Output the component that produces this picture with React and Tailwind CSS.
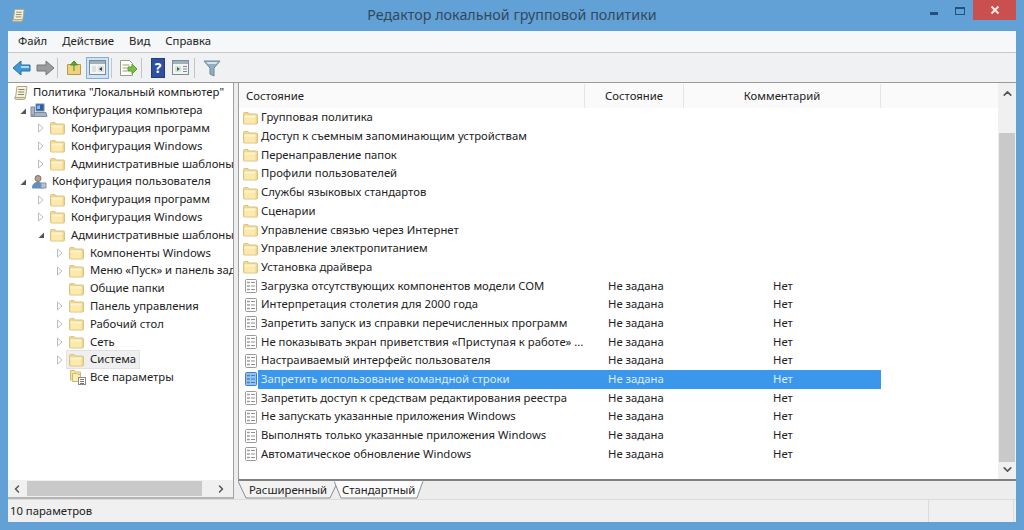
import { ChevronUp, ChevronDown, ChevronLeft, ChevronRight } from 'lucide-react';

const treeRows = [
  { label: 'Конфигурация программ', depth: 2, arrow: 'closed' },
  { label: 'Конфигурация Windows', depth: 2, arrow: 'closed' },
  { label: 'Административные шаблоны', depth: 2, arrow: 'closed' },
];

const userRows = [
  { label: 'Конфигурация программ', depth: 2, arrow: 'closed' },
  { label: 'Конфигурация Windows', depth: 2, arrow: 'closed' },
  { label: 'Административные шаблоны', depth: 2, arrow: 'open' },
  { label: 'Компоненты Windows', depth: 3, arrow: 'closed' },
  { label: 'Меню «Пуск» и панель задач', depth: 3, arrow: 'closed' },
  { label: 'Общие папки', depth: 3 },
  { label: 'Панель управления', depth: 3, arrow: 'closed' },
  { label: 'Рабочий стол', depth: 3, arrow: 'closed' },
  { label: 'Сеть', depth: 3, arrow: 'closed' },
  { label: 'Система', depth: 3, arrow: 'closed', selected: true },
];

const folders = [
  'Групповая политика',
  'Доступ к съемным запоминающим устройствам',
  'Перенаправление папок',
  'Профили пользователей',
  'Службы языковых стандартов',
  'Сценарии',
  'Управление связью через Интернет',
  'Управление электропитанием',
  'Установка драйвера',
];

const policies = [
  'Загрузка отсутствующих компонентов модели COM',
  'Интерпретация столетия для 2000 года',
  'Запретить запуск из справки перечисленных программ',
  'Не показывать экран приветствия «Приступая к работе» ...',
  'Настраиваемый интерфейс пользователя',
  'Запретить использование командной строки',
  'Запретить доступ к средствам редактирования реестра',
  'Не запускать указанные приложения Windows',
  'Выполнять только указанные приложения Windows',
  'Автоматическое обновление Windows',
];

const FolderIcon = () => (
  <svg width="16" height="16" viewBox="0 0 16 16" className="shrink-0">
    <path d="M1.500 3.500q0-1 1-1h3.500l1 1.500h7.500q1 0 1 1v8q0 1-1 1h-12q-1 0-1-1z" fill="#f3d684" stroke="#d9c48f" />
    <path d="M2.500 5.500h11v8h-11z" fill="#fbeaab" />
    <path d="M2.500 5.500h11v2h-11z" fill="#fdf4cf" />
  </svg>
);

const PolicyIcon = ({ selected }) => (
  <svg width="14" height="16" viewBox="0 0 14 16" className="shrink-0">
    <rect x="1.500" y="1.500" width="11" height="13" rx="1" fill={selected ? '#8fc3f5' : '#fff'} stroke={selected ? '#3a7fc8' : '#9a9a9a'} />
    <path d="M3.500 4.500h2M3.500 8h2M3.500 11.500h2" stroke="#333" strokeWidth="1.300" strokeDasharray="1 .6" />
    <path d="M7 4.500h4M7 8h4M7 11.500h4" stroke={selected ? '#3a7fc8' : '#8e8e8e'} />
  </svg>
);

const ScrollIcon = ({ size = 16 }) => (
  <svg width={size} height={size} viewBox="0 0 16 16" className="shrink-0">
    <path d="M4 1.500h10l-1.500 11h-10z" fill="#f5f1dc" stroke="#b0a988" />
    <path d="M1.500 12.500c0 2 1 2 2 2h7c1 0 2-.5 2-2z" fill="#e3dcb8" stroke="#b0a988" />
    <path d="M5.500 4.500h6M5.200 7h6M5 9.500h6" stroke="#8a8468" />
  </svg>
);

const ComputerIcon = () => (
  <svg width="18" height="16" viewBox="0 0 18 16" className="shrink-0">
    <rect x="6" y="1" width="8" height="7" fill="#2a5fa8" stroke="#7c8ca3" />
    <path d="M7 3l3-1v4H7z" fill="#8db7e6" />
    <path d="M2 9.500h14l1 4H1z" fill="#a7b3c6" stroke="#7c8ca3" />
    <rect x="1" y="4" width="3.500" height="8" fill="#aab6c7" stroke="#7c8ca3" />
  </svg>
);

const UserIcon = () => (
  <svg width="18" height="16" viewBox="0 0 18 16" className="shrink-0">
    <circle cx="8" cy="4.500" r="3" fill="#b9a28c" stroke="#7d6f62" />
    <path d="M2.500 14c0-4 2-5.500 5.500-5.500s5.500 1.500 5.500 5.500z" fill="#5f8fc6" stroke="#6c86a8" />
    <path d="M11 9h5v5h-5z" fill="#b6c3d2" stroke="#8493a5" />
  </svg>
);

const Arrow = ({ type }) => {
  if (type === 'open') {
    return (
      <svg width="8" height="8" viewBox="0 0 8 8" className="shrink-0">
        <path d="M7 1.500V7H1.500z" fill="#555" />
      </svg>
    );
  }
  if (type === 'closed') {
    return (
      <svg width="8" height="10" viewBox="0 0 8 10" className="shrink-0">
        <path d="M1.500 1L6 5 1.500 9z" fill="#fff" stroke="#bdbdbd" />
      </svg>
    );
  }
  return <span className="w-2 shrink-0" />;
};

const depthPad = { 2: 'pl-[29px]', 3: 'pl-[48px]' };

const TreeRow = ({ row }) => (
  <div className={`h-[17.8px] flex items-center whitespace-nowrap ${depthPad[row.depth]}`}>
    <Arrow type={row.arrow} />
    <div className={`flex items-center gap-[6px] ml-[3px] h-[17px] pl-[1px] pr-[3px] ${row.selected ? 'bg-[#efefef] outline outline-[#e2e2e2]' : ''}`}>
      <FolderIcon />
      <span>{row.label}</span>
    </div>
  </div>
);

const ToolbarSep = ({ className }) => <div className={`w-px h-[20px] bg-[#c4c4c4] ${className}`} />;

const Toolbar = () => (
  <div className="h-[30px] shrink-0 flex items-center pl-[4px] border-t border-[#c8c8c8] bg-[#f0f1f2]">
    <svg width="20" height="16" viewBox="0 0 20 16" className="shrink-0">
      <path d="M1 8l8-7v4h9v6H9v4z" fill="#3d9ad6" stroke="#2a6f9e" />
      <path d="M9 6h8v2H9z" fill="#a9dcf5" />
    </svg>
    <svg width="20" height="16" viewBox="0 0 20 16" className="shrink-0 ml-[3px]">
      <path d="M19 8l-8-7v4H2v6h9v4z" fill="#9b9b9b" stroke="#777" />
    </svg>
    <ToolbarSep className="ml-[2px]" />
    <svg width="18" height="18" viewBox="0 0 18 18" className="shrink-0 ml-[7px]">
      <path d="M2.500 5.500h13v10h-13z" fill="#edd37e" stroke="#b9984b" />
      <path d="M9 12V5M5.500 6L9 2l3.500 4z" fill="#5aa832" stroke="#4a8f28" />
    </svg>
    <div className="w-[23px] h-[22px] ml-[3px] shrink-0 flex items-center justify-center bg-[#cfe3f4] border border-[#7fb0dc]">
      <svg width="17" height="15" viewBox="0 0 17 15">
        <rect x=".5" y=".5" width="16" height="14" fill="#f4f4f4" stroke="#7d8b95" />
        <rect x="1" y="1" width="15" height="3" fill="#9fb0bb" />
        <path d="M3 6h4v6H3zM9 6h6v6H9z" fill="#d9e4dc" />
        <path d="M13 7l-3 2 3 2z" fill="#2c3e50" />
      </svg>
    </div>
    <ToolbarSep className="ml-[2px]" />
    <svg width="19" height="18" viewBox="0 0 19 18" className="shrink-0 ml-[7px]">
      <path d="M1.500 1.500h9l3 3v12h-12z" fill="#fff" stroke="#9a9a7e" />
      <path d="M3.500 6h7M3.500 9h5M3.500 12h5" stroke="#a0a070" />
      <path d="M9 8h4V5l5 5-5 5v-3H9z" fill="#7cc142" stroke="#5a9a2e" />
    </svg>
    <ToolbarSep className="ml-[3px]" />
    <div className="w-[14px] h-[20px] ml-[9px] shrink-0 bg-[#2f4f9f] border border-[#243c7a] flex items-center justify-center text-white text-[14px] font-bold leading-none">?</div>
    <svg width="17" height="15" viewBox="0 0 17 15" className="shrink-0 ml-[7px]">
      <rect x=".5" y=".5" width="16" height="14" fill="#f4f4f4" stroke="#7d8b95" />
      <rect x="1" y="1" width="15" height="3" fill="#9fb0bb" />
      <path d="M3 6h6v6H3z" fill="#d9e4dc" />
      <path d="M5 7l3 2-3 2z" fill="#2c6e50" />
      <path d="M11 6.500h4M11 9h4M11 11.500h4" stroke="#7d8b95" />
    </svg>
    <ToolbarSep className="ml-[5px]" />
    <svg width="18" height="18" viewBox="0 0 18 18" className="shrink-0 ml-[8px]">
      <path d="M1 2h16l-6 7v8l-4-2V9z" fill="#8eb0c4" stroke="#6b8698" />
      <path d="M3 3h12l-2 2H5z" fill="#d4e2ea" />
    </svg>
  </div>
);

const App = () => (
  <div className="w-[1024px] h-[530px] overflow-hidden flex flex-col bg-[#62a1d5] px-[8px] pb-[8px] text-[#222] text-[11.3px] font-['Noto_Sans',sans-serif]">
    {/* title bar */}
    <div className="h-[31px] shrink-0 grid grid-cols-[1fr_auto_1fr] items-center">
      <div className="ml-[3px]"><ScrollIcon size={15} /></div>
      <div className="text-[#33485c] text-[14.3px] -mt-[1px]">Редактор локальной групповой политики</div>
      <div className="flex items-start justify-end h-full">
        <div className="w-[8px] h-[3px] bg-[#24507e] mt-[12px]" />
        <div className="w-[10px] h-[8px] border border-[#24507e] border-t-2 mt-[7px] ml-[17px]" />
        <div className="w-[43px] h-[20px] bg-[#c9504f] ml-[8px] flex items-center justify-center">
          <svg width="10" height="10" viewBox="0 0 10 10">
            <path d="M1.500 1.500l7 7M8.500 1.500l-7 7" stroke="#fde8e3" strokeWidth="2" />
          </svg>
        </div>
      </div>
    </div>

    {/* menu */}
    <div className="h-[21px] shrink-0 bg-[#f5f7f9] flex items-center gap-[15px] pl-[10px]">
      <span>Файл</span>
      <span>Действие</span>
      <span>Вид</span>
      <span>Справка</span>
    </div>

    <Toolbar />

    {/* panes */}
    <div className="flex-1 min-h-0 flex bg-[#ededed] border-t border-[#9a9a9a]">
      {/* tree */}
      <div className="w-[226px] shrink-0 flex flex-col bg-white border-r border-[#a0a0a0] border-b-2 border-b-[#b5b5b5]">
        <div className="flex-1 min-h-0 overflow-hidden pt-[1px]">
          <div className="h-[17.8px] flex items-center gap-[4px] pl-[5px] whitespace-nowrap">
            <ScrollIcon />
            <span>Политика "Локальный компьютер"</span>
          </div>
          <div className="h-[17.8px] flex items-center gap-[3px] pl-[11px] whitespace-nowrap">
            <Arrow type="open" />
            <ComputerIcon />
            <span className="ml-[1px]">Конфигурация компьютера</span>
          </div>
          {treeRows.map((r, i) => <TreeRow key={i} row={r} />)}
          <div className="h-[17.8px] flex items-center gap-[3px] pl-[11px] whitespace-nowrap">
            <Arrow type="open" />
            <UserIcon />
            <span className="ml-[1px]">Конфигурация пользователя</span>
          </div>
          {userRows.map((r, i) => <TreeRow key={i} row={r} />)}
          <div className="h-[17.8px] flex items-center gap-[3px] pl-[61px] whitespace-nowrap">
            <svg width="18" height="17" viewBox="0 0 18 17" className="shrink-0">
              <path d="M1.500 1.500h4l1 1.500h5v8h-10z" fill="#f6e3a2" stroke="#d0b872" />
              <path d="M3.500 4.500h4l1 1h3v7h-8z" fill="#fbeeb8" stroke="#d0b872" />
              <rect x="9.500" y="8.500" width="7" height="7" fill="#fff" stroke="#8a8a8a" />
              <path d="M11 10.500h4M11 12.500h4M11 14.500h4" stroke="#777" />
            </svg>
            <span>Все параметры</span>
          </div>
        </div>
        <div className="h-[17px] shrink-0 flex items-center bg-[#f0f0f0]">
          <ChevronLeft size={12} strokeWidth={3} className="text-[#555] ml-[3px]" />
          <div className="w-[175px] h-[15px] bg-[#c9c9c9] ml-[4px]" />
          <ChevronRight size={12} strokeWidth={3} className="text-[#555] ml-[13px]" />
        </div>
      </div>

      {/* list */}
      <div className="flex-1 min-w-0 flex flex-col ml-[4px]">
        <div className="flex-1 min-h-0 flex bg-white border-l border-[#a0a0a0] border-b-2 border-b-[#808080]">
          <div className="flex-1 min-w-0 flex flex-col">
            <div className="h-[25px] shrink-0 flex items-center bg-[#fafafa] pt-[1px]">
              <div className="w-[346px] h-full flex items-center pl-[7px] border-r border-[#e5e5e5]">Состояние</div>
              <div className="w-[99px] h-full flex items-center pl-[20px] border-r border-[#e5e5e5]">Состояние</div>
              <div className="w-[197px] h-full flex items-center justify-center border-r border-[#e5e5e5]">Комментарий</div>
            </div>
            <div className="pt-[0.5px]">
              {folders.map((f) => (
                <div key={f} className="h-[18.7px] flex items-center pl-[3px] gap-[3px] whitespace-nowrap">
                  <FolderIcon />
                  <span>{f}</span>
                </div>
              ))}
              {policies.map((p, i) => {
                const selected = i === 5;
                return (
                  <div key={p} className="h-[18.7px] w-[642px] flex items-center pl-[5px] whitespace-nowrap">
                    <PolicyIcon selected={selected} />
                    <div className={`flex-1 h-full flex items-center pl-[3px] ${selected ? 'bg-[#3b97eb] text-[#dcecfb]' : ''}`}>
                      <span className="w-[347px]">{p}</span>
                      <span className="w-[165px]">Не задана</span>
                      <span>Нет</span>
                    </div>
                  </div>
                );
              })}
            </div>
          </div>
          <div className="w-[18px] shrink-0 flex flex-col items-center bg-[#f0f0f0]">
            <ChevronUp size={13} strokeWidth={3} className="text-[#555] mt-[4px]" />
            <div className="w-[16px] h-[329px] bg-[#c9c9c9] mt-[33px]" />
            <ChevronDown size={13} strokeWidth={3} className="text-[#555] mt-[1px]" />
          </div>
        </div>
        <div className="h-[18px] shrink-0 flex">
          <div className="relative w-[101px] h-[18px] flex items-center pl-[11px]">
            <svg width="101" height="18" viewBox="0 0 101 18" className="absolute inset-0">
              <path d="M0 0L8 17H92L100 0" fill="#f2f2f2" stroke="#8c8c8c" />
            </svg>
            <span className="relative">Расширенный</span>
          </div>
          <div className="relative w-[90px] h-[18px] -ml-[5px] flex items-center pl-[8px]">
            <svg width="90" height="18" viewBox="0 0 90 18" className="absolute inset-0">
              <path d="M0 0L7 17H83L89 0" fill="#fbfbfb" stroke="#8c8c8c" />
              <path d="M0 0H89" stroke="#fbfbfb" />
            </svg>
            <span className="relative">Стандартный</span>
          </div>
        </div>
      </div>
    </div>

    {/* status */}
    <div className="h-[23px] shrink-0 flex items-center bg-[#f0f0f0] border-t border-[#dcdcdc]">
      <span className="w-[921px] h-full flex items-center pl-[2px] pt-[1px] border-r border-[#dcdcdc]">10 параметров</span>
      <span className="w-[85px] h-full border-r border-[#dcdcdc]" />
    </div>
  </div>
);

export default App;
